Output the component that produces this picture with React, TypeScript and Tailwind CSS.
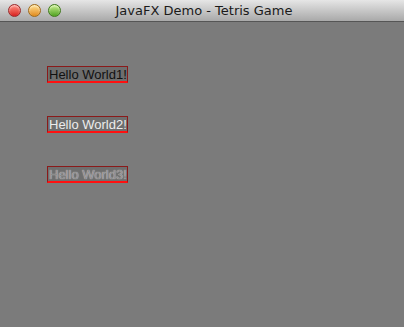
/* JavaFX demo window - three labelled text boxes on a grey stage */

function TrafficLight({ from, to, ring }: { from: string; to: string; ring: string }) {
  return (
    <div
      className={`w-[13px] h-[13px] rounded-full border ${ring} ${from} ${to} bg-gradient-to-b shadow-[inset_0_1px_2px_rgba(255,255,255,0.6)]`}
    />
  );
}

function HelloBox({ label, tone }: { label: string; tone: 'dark' | 'light' | 'ghost' }) {
  const textClass =
    tone === 'dark'
      ? 'text-[#111111]'
      : tone === 'light'
      ? 'text-[#ececec]'
      : 'text-[#8c8c8c] [text-shadow:0_0_1px_#f0f0f0]';
  return (
    <div className="w-[81px] h-[17px] bg-[#6e6e6e] border border-[#8a1a1a] border-b-2 border-b-[#ff1010] flex items-center pl-[1px] overflow-hidden">
      <span
        className={`text-[13px] leading-none whitespace-nowrap ${textClass}`}
        style={{ fontFamily: '"Liberation Sans", Arial, sans-serif' }}
      >
        {label}
      </span>
    </div>
  );
}

export default function App() {
  return (
    <div className="w-[404px] h-[327px] flex flex-col bg-[#7b7b7b]">
      {/* Title bar */}
      <div className="h-[22px] relative flex items-center bg-gradient-to-b from-[#e6e6e6] to-[#a9a9a9] border-b border-[#555555] shrink-0">
        <div className="flex items-center gap-[7px] pl-[8px]">
          <TrafficLight from="from-[#ff8a80]" to="to-[#d8141b]" ring="border-[#9a2a2a]" />
          <TrafficLight from="from-[#ffe08a]" to="to-[#e08a10]" ring="border-[#a06a1a]" />
          <TrafficLight from="from-[#c8f08a]" to="to-[#4ea21a]" ring="border-[#3f7a1a]" />
        </div>
        <div
          className="absolute inset-0 flex items-center justify-center text-[13px] text-[#1a1a1a]"
          style={{ fontFamily: '"DejaVu Sans", sans-serif' }}
        >
          <span className="pl-[4px]">JavaFX Demo - Tetris Game</span>
        </div>
      </div>

      {/* Stage */}
      <div className="flex flex-col gap-[33px] pl-[47px] pt-[44px]">
        <HelloBox label="Hello World1!" tone="dark" />
        <HelloBox label="Hello World2!" tone="light" />
        <HelloBox label="Hello World3!" tone="ghost" />
      </div>
    </div>
  );
}
